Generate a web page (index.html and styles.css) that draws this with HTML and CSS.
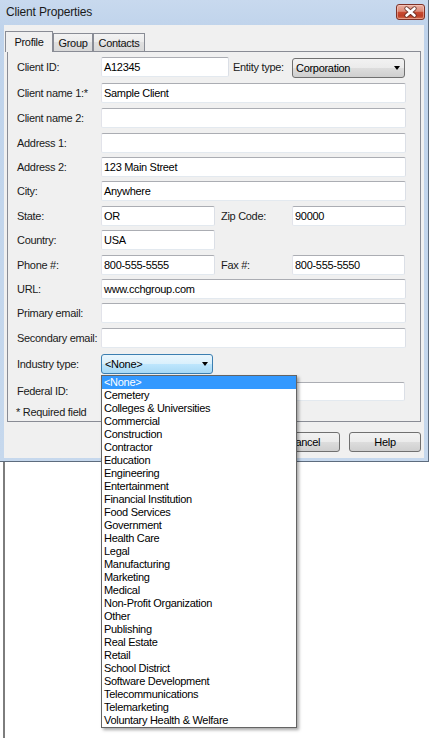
FILE: index.html
```html
<!DOCTYPE html>
<html>
<head>
<meta charset="utf-8">
<title>Client Properties</title>
<link rel="stylesheet" href="styles.css">
</head>
<body>
<div class="window">
  <div class="titlebar">
    <span class="title">Client Properties</span>
    <div class="close">
      <svg width="27" height="14" viewBox="0 0 27 14">
        <path d="M9.5 3.5 L17.5 10.5 M17.5 3.5 L9.5 10.5" stroke="#5a2a22" stroke-width="4.4" stroke-linecap="round" fill="none" opacity="0.8"/>
        <path d="M9.5 3.5 L17.5 10.5 M17.5 3.5 L9.5 10.5" stroke="#ffffff" stroke-width="2.6" stroke-linecap="round" fill="none"/>
      </svg>
    </div>
  </div>
  <div class="client">
    <div class="tabs">
      <div class="tab active t-profile">Profile</div>
      <div class="tab t-group">Group</div>
      <div class="tab t-contacts">Contacts</div>
    </div>
    <div class="panel">
      <div class="row">
        <span class="lbl">Client ID:</span>
        <span class="field w-id">A12345</span>
        <span class="lbl2 entity">Entity type:</span>
        <span class="combo w-ent">Corporation<i class="arrow"></i></span>
      </div>
      <div class="row g6">
        <span class="lbl">Client name 1:*</span>
        <span class="field w-full">Sample Client</span>
      </div>
      <div class="row g5">
        <span class="lbl">Client name 2:</span>
        <span class="field w-full"></span>
      </div>
      <div class="row g5">
        <span class="lbl">Address 1:</span>
        <span class="field w-full"></span>
      </div>
      <div class="row">
        <span class="lbl">Address 2:</span>
        <span class="field w-full">123 Main Street</span>
      </div>
      <div class="row">
        <span class="lbl">City:</span>
        <span class="field w-full">Anywhere</span>
      </div>
      <div class="row g5">
        <span class="lbl">State:</span>
        <span class="field w-half">OR</span>
        <span class="lbl2">Zip Code:</span>
        <span class="field w-half">90000</span>
      </div>
      <div class="row">
        <span class="lbl">Country:</span>
        <span class="field w-half">USA</span>
      </div>
      <div class="row g5">
        <span class="lbl">Phone #:</span>
        <span class="field w-half">800-555-5555</span>
        <span class="lbl2">Fax #:</span>
        <span class="field w-fax">800-555-5550</span>
      </div>
      <div class="row">
        <span class="lbl">URL:</span>
        <span class="field w-full">www.cchgroup.com</span>
      </div>
      <div class="row">
        <span class="lbl">Primary email:</span>
        <span class="field w-full"></span>
      </div>
      <div class="row g5">
        <span class="lbl">Secondary email:</span>
        <span class="field w-full"></span>
      </div>
      <div class="row g6">
        <span class="lbl">Industry type:</span>
        <span class="combo focus w-ind">&lt;None&gt;<i class="arrow"></i>
          <div class="list">
            <div class="item sel">&lt;None&gt;</div>
            <div class="item">Cemetery</div>
            <div class="item">Colleges &amp; Universities</div>
            <div class="item">Commercial</div>
            <div class="item">Construction</div>
            <div class="item">Contractor</div>
            <div class="item">Education</div>
            <div class="item">Engineering</div>
            <div class="item">Entertainment</div>
            <div class="item">Financial Institution</div>
            <div class="item">Food Services</div>
            <div class="item">Government</div>
            <div class="item">Health Care</div>
            <div class="item">Legal</div>
            <div class="item">Manufacturing</div>
            <div class="item">Marketing</div>
            <div class="item">Medical</div>
            <div class="item">Non-Profit Organization</div>
            <div class="item">Other</div>
            <div class="item">Publishing</div>
            <div class="item">Real Estate</div>
            <div class="item">Retail</div>
            <div class="item">School District</div>
            <div class="item">Software Development</div>
            <div class="item">Telecommunications</div>
            <div class="item">Telemarketing</div>
            <div class="item">Voluntary Health &amp; Welfare</div>
          </div>
        </span>
      </div>
      <div class="row g7">
        <span class="lbl">Federal ID:</span>
        <span class="field w-fed"></span>
      </div>
      <div class="note">* Required field</div>
    </div>
    <div class="buttons">
      <button class="btn">OK</button>
      <button class="btn">Cancel</button>
      <button class="btn">Help</button>
    </div>
  </div>
</div>
<div class="behind"></div>
</body>
</html>
```

FILE: styles.css
```css
* { box-sizing: border-box; }
html, body { margin: 0; padding: 0; }
body {
  width: 431px;
  height: 738px;
  overflow: hidden;
  background: #ffffff;
  font-family: "Liberation Sans", Arial, sans-serif;
  font-size: 11px;
  letter-spacing: -0.3px;
  color: #1a1a1a;
}

/* window frame */
.window {
  width: 429px;
  height: 462px;
  display: flex;
  flex-direction: column;
  padding-bottom: 3px;
  background: linear-gradient(#c8d9ee, #bfd3eb 30px, #c6d8ed);
  border-right: 1px solid #5d6c7e;
  border-bottom: 1px solid #5d6c7e;
}
.titlebar {
  height: 25px;
  flex: none;
  display: flex;
  justify-content: space-between;
  align-items: flex-start;
  padding: 0 3px 0 6px;
}
.title {
  font-size: 12px;
  line-height: 25px;
  letter-spacing: -0.15px;
  color: #1a1a1a;
}
.close {
  margin-top: 4px;
  width: 29px;
  height: 16px;
  border: 1px solid #7f3126;
  border-radius: 3px;
  background: linear-gradient(#eab0a3, #dc8b78 45%, #c84a31 52%, #bd3f27 78%, #d7714f);
  box-shadow: inset 0 0 0 1px rgba(255, 220, 210, 0.45);
  display: flex;
  align-items: center;
  justify-content: center;
}
.close svg { display: block; }

/* client area */
.client {
  flex: 1;
  margin: 0 4px;
  background: #f0f0f0;
  display: flex;
  flex-direction: column;
  padding: 6px 3px 0 1px;
}
.tabs {
  height: 21px;
  display: flex;
  align-items: flex-end;
  flex: none;
}
.tab {
  height: 18px;
  margin-bottom: 1px;
  border: 1px solid #898c95;
  border-bottom: none;
  background: linear-gradient(#f3f3f3, #ebebeb 50%, #e0e0e0 50%, #d9d9d9);
  display: flex;
  align-items: center;
  justify-content: center;
  color: #111;
}
.tab.active {
  height: 21px;
  margin-bottom: 0;
  background: #f0f0f0;
  position: relative;
  z-index: 2;
}
.t-profile { width: 48px; }
.t-group { width: 40px; }
.t-contacts { width: 52px; }

.panel {
  margin: -1px 0 0 2px;
  height: 371px;
  flex: none;
  border: 1px solid #898c95;
  background: #f0f0f0;
  padding: 5px 0 0 9px;
  display: flex;
  flex-direction: column;
  gap: 4px;
}
.row {
  height: 20px;
  display: flex;
  align-items: center;
  flex: none;
}
.g5 { margin-top: 1px; }
.g6 { margin-top: 2px; }
.g7 { margin-top: 3px; }
.lbl {
  width: 84px;
  flex: none;
  white-space: nowrap;
}
.lbl2 {
  width: 71px;
  margin-left: 6px;
  flex: none;
  white-space: nowrap;
}
.lbl2.entity {
  width: 59px;
  margin-left: 4px;
}
.field {
  height: 20px;
  flex: none;
  background: #ffffff;
  border: 1px solid;
  border-color: #abadb3 #dbdfe6 #e3e9ef #e2e3ea;
  border-radius: 2px;
  padding-left: 2px;
  display: flex;
  align-items: center;
  color: #000;
  white-space: nowrap;
}
.w-full { width: 305px; }
.w-half { width: 114px; }
.w-fax { width: 113px; }
.w-id { width: 128px; }
.w-fed { width: 304px; height: 19px; }

.combo {
  position: relative;
  height: 20px;
  flex: none;
  border: 1px solid #707070;
  border-radius: 3px;
  background: linear-gradient(#f2f2f2, #ebebeb 50%, #dddddd 50%, #cfcfcf);
  padding: 0 4px 0 3px;
  display: flex;
  align-items: center;
  justify-content: space-between;
  color: #000;
  white-space: nowrap;
}
.w-ent { width: 113px; align-self: flex-start; margin-top: 1px; }
.w-ind { width: 112px; }
.combo.focus {
  border-color: #3c7fb1;
  background: linear-gradient(#eaf6fd, #d9f0fc 50%, #bee6fd 50%, #a7d9f5);
}
.arrow {
  width: 0;
  height: 0;
  border-left: 3.5px solid transparent;
  border-right: 3.5px solid transparent;
  border-top: 4px solid #000;
}

/* dropdown list */
.list {
  position: absolute;
  top: 20px;
  left: -1px;
  width: 196px;
  z-index: 10;
  background: #ffffff;
  border: 1px solid #646464;
  box-shadow: 2px 2px 3px rgba(0, 0, 0, 0.35);
  display: flex;
  flex-direction: column;
}
.item {
  height: 13px;
  line-height: 13px;
  padding-left: 2px;
  white-space: nowrap;
  color: #000;
}
.item.sel {
  background: #3399ff;
  color: #ffffff;
}

.note {
  margin: 1px 0 0 -1px;
  line-height: 13px;
}

/* buttons */
.buttons {
  margin-top: 10px;
  display: flex;
  justify-content: flex-end;
  gap: 9px;
  flex: none;
}
.btn {
  width: 72px;
  height: 20px;
  padding: 0;
  border: 1px solid #707070;
  border-radius: 3px;
  background: linear-gradient(#f2f2f2, #ebebeb 50%, #dddddd 50%, #cfcfcf);
  font: inherit;
  letter-spacing: inherit;
  color: #000;
}

/* window behind */
.behind {
  height: 276px;
  margin-left: 3px;
  border-left: 2px solid #7d7d7d;
}
```
